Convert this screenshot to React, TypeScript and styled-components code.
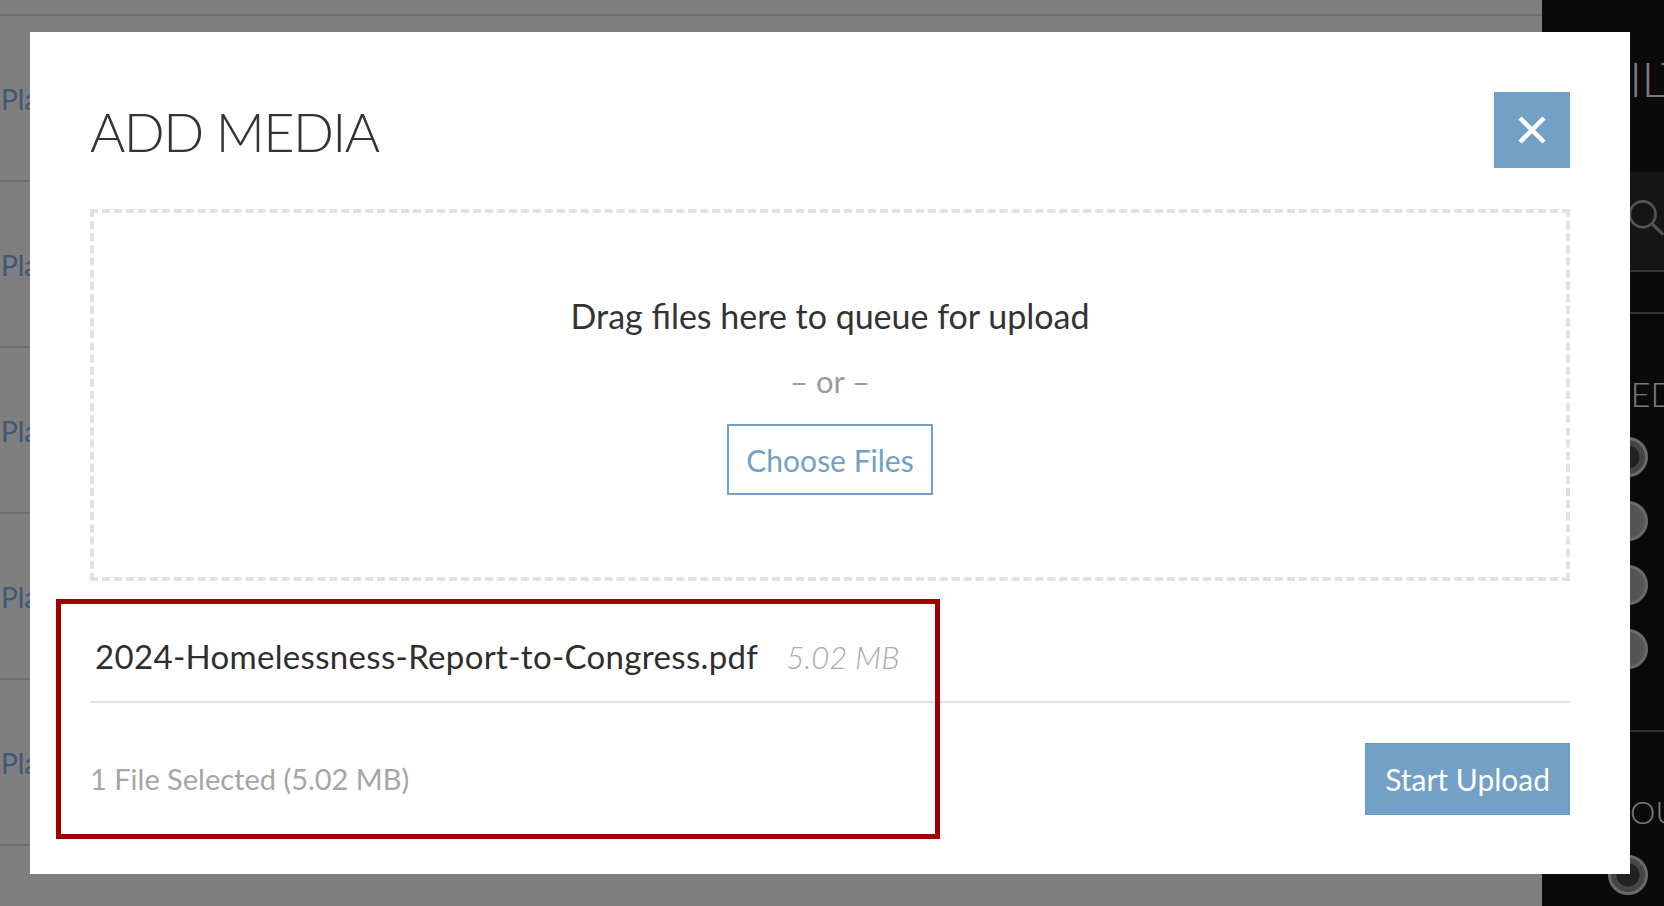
import styled, { createGlobalStyle } from "styled-components"

const GlobalStyle = createGlobalStyle`
	html,
	body {
		margin: 0;
		padding: 0;
	}

	body {
		font-family: Lato, "Liberation Sans", sans-serif;
		background: #ffffff;
		overflow: hidden;
	}

	* {
		box-sizing: border-box;
	}
`

const rows = ["Placeholder", "Placeholder", "Placeholder", "Placeholder", "Placeholder"]

const SearchIcon = () => (
	<svg width="44" height="44" viewBox="0 0 44 44" fill="none">
		<circle cx="20" cy="20" r="14.5" stroke="#a8a8a8" strokeWidth="3" />
		<path d="M30.5 30.5 L43 43" stroke="#a8a8a8" strokeWidth="3.5" />
	</svg>
)

const CloseIcon = () => (
	<svg width="30" height="30" viewBox="0 0 30 30">
		<path d="M3 3 L27 27 M27 3 L3 27" stroke="#ffffff" strokeWidth="4.5" />
	</svg>
)

const App = () => {
	return (
		<>
			<GlobalStyle />
			<Page>
				<ListPane>
					<List>
						{rows.map((r, i) => (
							<ListRow key={i}>
								<RowTitle>{r}</RowTitle>
							</ListRow>
						))}
					</List>
				</ListPane>

				<Sidebar>
					<SidebarTitle>FILTERS</SidebarTitle>
					<SearchBox>
						<SearchIcon />
					</SearchBox>
					<SidebarBand />
					<SidebarHeading $indent={28}>SAVED</SidebarHeading>
					<RadioList>
						<Radio $checked />
						<Radio />
						<Radio />
						<Radio />
					</RadioList>
					<SidebarRule />
					<SidebarHeading $indent={71} $small>
						SOURCE
					</SidebarHeading>
					<RadioList>
						<Radio $checked />
					</RadioList>
				</Sidebar>

				<Backdrop />

				<Modal>
					<ModalHeader>
						<Title>ADD MEDIA</Title>
						<CloseButton aria-label="Close">
							<CloseIcon />
						</CloseButton>
					</ModalHeader>

					<DropZone>
						<DropText>Drag files here to queue for upload</DropText>
						<OrText>– or –</OrText>
						<ChooseButton>Choose Files</ChooseButton>
					</DropZone>

					<FileRow>
						<FileName>2024-Homelessness-Report-to-Congress.pdf</FileName>
						<FileSize>5.02 MB</FileSize>
					</FileRow>

					<Footer>
						<SelectedText>1 File Selected (5.02 MB)</SelectedText>
						<StartButton>Start Upload</StartButton>
					</Footer>

					<Highlight />
				</Modal>
			</Page>
		</>
	)
}

export default App

const Page = styled.div`
	position: relative;
	width: 1664px;
	height: 906px;
	display: grid;
	grid-template-columns: 1fr 122px;
	overflow: hidden;
`

const ListPane = styled.div`
	background: #ffffff;
	padding-top: 14px;
	overflow: hidden;
`

const List = styled.div`
	border-top: 2px solid #dedede;
`

const ListRow = styled.div`
	height: 166px;
	padding: 63px 0 0 1px;
	border-bottom: 2px solid #dedede;
`

const RowTitle = styled.span`
	display: block;
	font-size: 28px;
	line-height: 40px;
	color: #7ab2e6;
	white-space: nowrap;
`

const Sidebar = styled.aside`
	background: #141414;
	color: #f6f6f6;
	display: flex;
	flex-direction: column;
	overflow: hidden;
`

const SidebarTitle = styled.div`
	height: 172px;
	padding: 49px 0 0 61px;
	font-size: 47px;
	font-weight: 300;
	line-height: 60px;
	white-space: nowrap;
`

const SearchBox = styled.div`
	height: 98px;
	background: #2a2a2a;
	padding: 22px 0 0 83px;
	display: flex;
	align-items: flex-start;
`

const SidebarBand = styled.div`
	height: 44px;
	border-top: 2px solid #666666;
	border-bottom: 2px solid #666666;
`

const SidebarRule = styled.div`
	margin-top: 61px;
	border-top: 2px solid #666666;
`

const SidebarHeading = styled.div<{ $indent: number; $small?: boolean }>`
	margin-top: 58px;
	padding-left: ${(p) => p.$indent}px;
	font-size: ${(p) => (p.$small ? 32 : 34)}px;
	font-weight: 300;
	line-height: 44px;
	white-space: nowrap;
`

const RadioList = styled.div`
	display: flex;
	flex-direction: column;
	gap: 24px;
	padding: 21px 0 0 66px;
`

const Radio = styled.span<{ $checked?: boolean }>`
	display: block;
	flex: none;
	width: 40px;
	height: 40px;
	border-radius: 50%;
	border: 3px solid #d2d2d2;
	background: ${(p) =>
		p.$checked
			? "radial-gradient(circle, #444444 0 11px, #8a8a8a 12px)"
			: "#aaaaaa"};
`

const Backdrop = styled.div`
	position: absolute;
	inset: 0;
	background: rgba(0, 0, 0, 0.5);
`

const Modal = styled.section`
	position: absolute;
	left: 30px;
	top: 32px;
	width: 1600px;
	height: 842px;
	background: #ffffff;
	padding: 60px 60px 0;
`

const ModalHeader = styled.header`
	display: flex;
	justify-content: space-between;
	align-items: center;
	height: 76px;
`

const Title = styled.h1`
	margin: 3px 0 0;
	font-size: 54px;
	font-weight: 300;
	line-height: 56px;
	color: #333333;
	letter-spacing: -1.6px;
`

const CloseButton = styled.button`
	width: 76px;
	height: 76px;
	padding: 0;
	border: 0;
	background: #73a0c6;
	display: flex;
	align-items: center;
	justify-content: center;
	cursor: pointer;
`

const DropZone = styled.div`
	margin-top: 41px;
	height: 372px;
	border: 4px dashed #e1e1e1;
	padding-top: 81px;
	display: flex;
	flex-direction: column;
	align-items: center;
`

const DropText = styled.p`
	margin: 0;
	font-size: 34px;
	line-height: 44px;
	color: #333333;
`

const OrText = styled.p`
	margin: 23px 0 0;
	font-size: 31px;
	line-height: 40px;
	color: #9a9a9a;
`

const ChooseButton = styled.button`
	margin-top: 23px;
	height: 71px;
	padding: 0 17px;
	border: 2px solid #73a0c6;
	background: #ffffff;
	color: #73a0c6;
	font-family: Lato, "Liberation Sans", sans-serif;
	font-size: 30px;
	line-height: 1.2;
	cursor: pointer;
`

const FileRow = styled.div`
	margin-top: 55px;
	padding: 0 5px 24px;
	border-bottom: 2px solid #e3e3e3;
	display: flex;
	align-items: baseline;
	line-height: 40px;
`

const FileName = styled.span`
	font-size: 33px;
	letter-spacing: 0.33px;
	color: #2e2e2e;
`

const FileSize = styled.span`
	margin-left: 28px;
	font-size: 31px;
	font-style: italic;
	font-weight: 300;
	color: #aaaaaa;
`

const Footer = styled.div`
	padding-top: 40px;
	display: flex;
	justify-content: space-between;
	align-items: center;
`

const SelectedText = styled.span`
	font-size: 29px;
	line-height: 40px;
	color: #a5a5a5;
`

const StartButton = styled.button`
	height: 72px;
	padding: 0 19px;
	border: 1px solid #6b98bf;
	background: #73a0c6;
	color: #ffffff;
	font-family: Lato, "Liberation Sans", sans-serif;
	font-size: 30px;
	line-height: 1.2;
	cursor: pointer;
`

const Highlight = styled.div`
	position: absolute;
	left: 26px;
	top: 567px;
	width: 884px;
	height: 240px;
	border: 5px solid #9e0000;
	pointer-events: none;
`
